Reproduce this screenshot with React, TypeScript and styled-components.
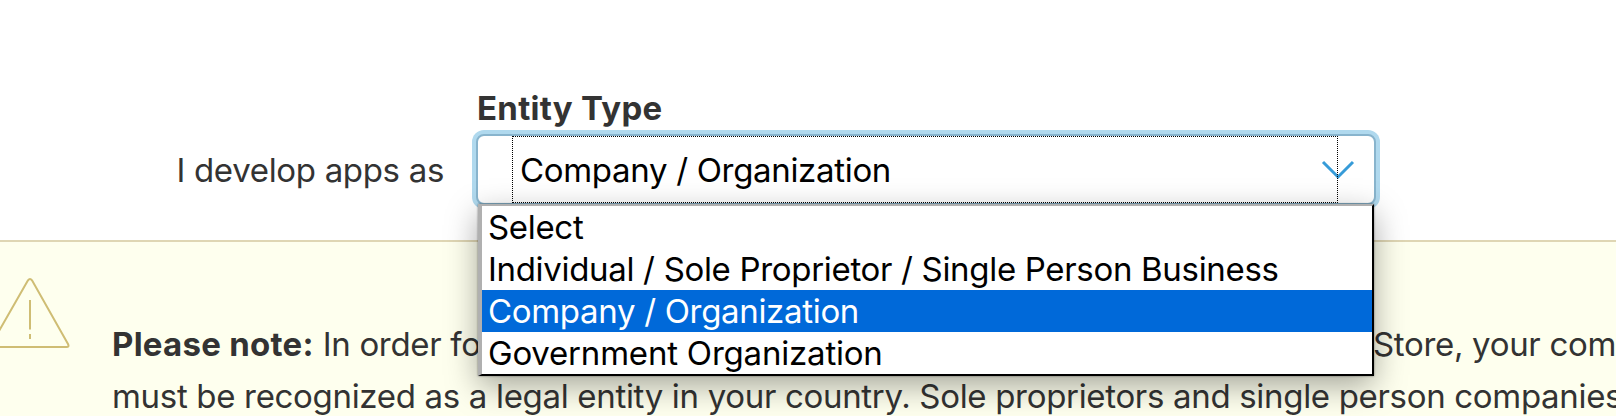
import React from 'react';
import styled, { createGlobalStyle } from 'styled-components';

const GlobalStyle = createGlobalStyle`
  * { box-sizing: border-box; }
  body {
    margin: 0;
    overflow: hidden;
    background: #fff;
    color: #333;
    font-family: Inter, 'Liberation Sans', sans-serif;
    font-size: 33px;
    letter-spacing: -0.32px;
  }
`;

const Page = styled.main`
  display: flex;
  flex-direction: column;
  height: 416px;
  overflow: hidden;
`;

const FormRow = styled.section`
  flex: none;
  display: grid;
  grid-template-columns: 444px 900px;
  grid-template-rows: 40px 72px;
  column-gap: 32px;
  row-gap: 6px;
  height: 240px;
  padding-top: 88px;
`;

const FieldTitle = styled.label`
  grid-column: 2;
  padding-left: 1px;
  line-height: 40px;
  font-weight: 700;
  letter-spacing: 0.28px;
`;

const Prompt = styled.span`
  text-align: right;
  line-height: 72px;
  white-space: nowrap;
`;

const SelectWrap = styled.div`
  position: relative;
`;

const SelectBox = styled.div`
  display: flex;
  height: 71px;
  padding: 0 36px 0 34px;
  border: 2px solid #88b4cd;
  border-radius: 8px;
  background: #fff;
  box-shadow: 0 0 0 4px #b0d9ee;
`;

const FocusArea = styled.div`
  position: relative;
  z-index: 1;
  flex: 1;
  height: 67px;
  padding-left: 7px;
  border: 1px dotted #000;
  color: #000;
  line-height: 66px;
`;

const Chevron = styled.svg`
  position: absolute;
  top: 26px;
  right: 21px;
`;

const Menu = styled.ul`
  position: absolute;
  top: 70px;
  left: 2px;
  z-index: 2;
  width: 896px;
  margin: 0;
  padding: 0;
  list-style: none;
  background: #fff;
  border-style: solid;
  border-width: 2px 2px 2px 4px;
  border-color: #b0b0b0 #000 #000 #b0b0b0;
  box-shadow: 0 0 2px rgba(0, 0, 0, 0.45), 0 10px 30px rgba(0, 0, 0, 0.35);
`;

const Option = styled.li<{ $active?: boolean }>`
  height: 42px;
  padding-left: 6px;
  line-height: 42px;
  white-space: nowrap;
  color: ${(p) => (p.$active ? '#fff' : '#000')};
  background: ${(p) => (p.$active ? '#0069d9' : '#fff')};

  &:last-child { letter-spacing: -0.2px; }
`;

const Notice = styled.aside`
  flex: 1;
  display: flex;
  border-top: 2px solid #dfd6b4;
  background: #feffee;
`;

const WarningIcon = styled.svg`
  flex: none;
  margin: 32px 34px 0 -12px;
`;

const NoticeText = styled.p`
  flex: none;
  margin: 76px 0 0;
  line-height: 52px;
  white-space: nowrap;

  strong { letter-spacing: 0.26px; }
`;

const Lead = styled.span`
  display: inline-block;
  width: 1261px;
  overflow: hidden;
  vertical-align: top;
`;

const options = [
  'Select',
  'Individual / Sole Proprietor / Single Person Business',
  'Company / Organization',
  'Government Organization',
];
const selected = options[2];

export default function App() {
  return (
    <Page>
      <GlobalStyle />
      <FormRow>
        <FieldTitle>Entity Type</FieldTitle>
        <Prompt>I develop apps as</Prompt>
        <SelectWrap>
          <SelectBox>
            <Chevron width="34" height="20" viewBox="0 0 34 20" fill="none" stroke="#369bd8" strokeWidth="3">
              <path d="M2 2 17 17 32 2" />
            </Chevron>
            <FocusArea>{selected}</FocusArea>
          </SelectBox>
          <Menu>
            {options.map((o) => (
              <Option key={o} $active={o === selected}>{o}</Option>
            ))}
          </Menu>
        </SelectWrap>
      </FormRow>
      <Notice>
        <WarningIcon width="90" height="80" viewBox="0 0 90 80" fill="none" stroke="#cfbd74" strokeWidth="2">
          <path d="M40 6.300 3.500 70Q2 73 5 73H78.500Q81.500 73 80 70L44 6.300Q42 3.500 40 6.300Z" />
          <path d="M42 26V55.500M42 60V65" />
        </WarningIcon>
        <NoticeText>
          <Lead><strong>Please note:</strong> In order for your organization to distribute apps on the App</Lead>
          Store, your company
          <br />
          must be recognized as a legal entity in your country. Sole proprietors and single person companies
        </NoticeText>
      </Notice>
    </Page>
  );
}
